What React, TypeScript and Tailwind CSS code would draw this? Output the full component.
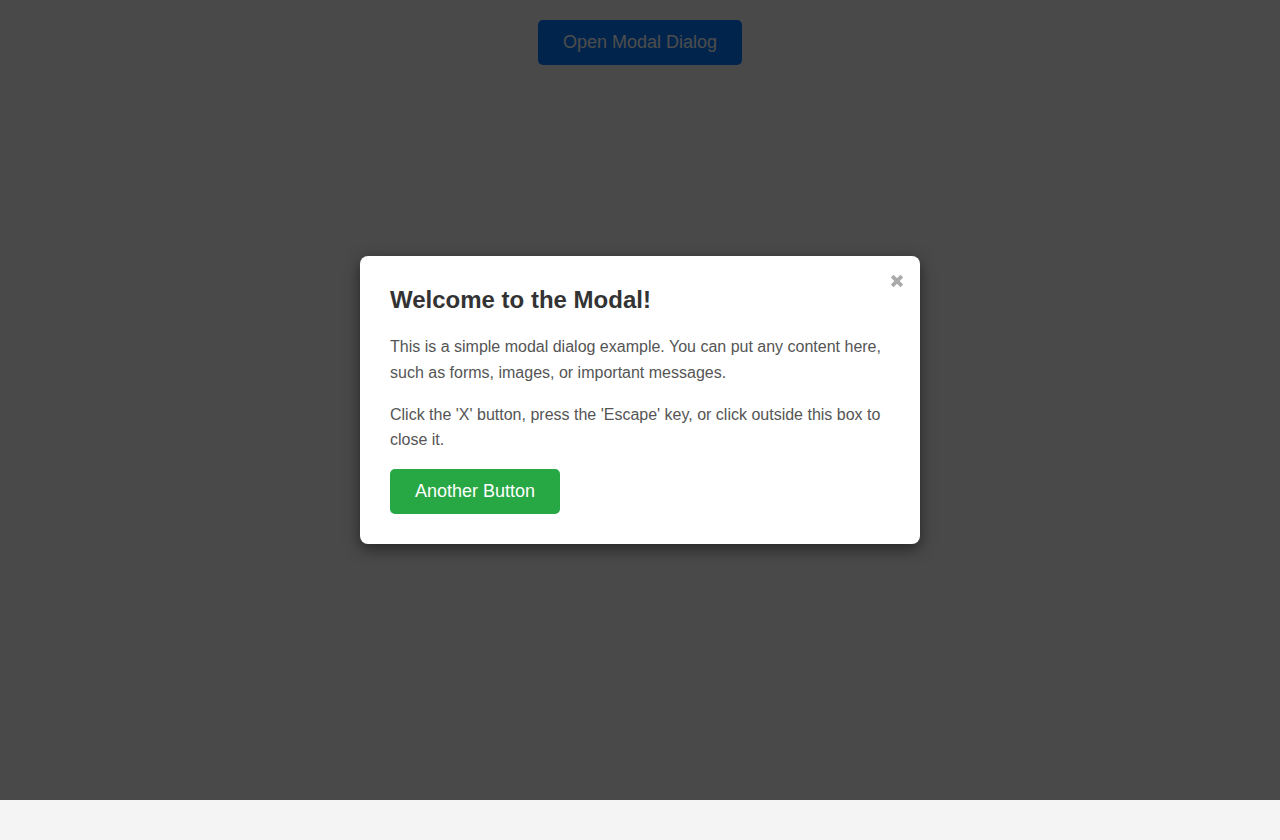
import { useState } from "react";

export default function App() {
  const [open, setOpen] = useState(true);

  return (
    <div
      className="relative min-h-[840px] w-full bg-[#f4f4f4]"
      style={{ fontFamily: '"Liberation Sans", Arial, sans-serif' }}
    >
      <div className="flex justify-center pt-5">
        <button
          onClick={() => setOpen(true)}
          className="rounded-[5px] bg-[#007bff] px-[25px] py-3 text-[18px] leading-[21px] text-white"
        >
          Open Modal Dialog
        </button>
      </div>

      {open && (
        <div
          className="absolute left-0 top-0 flex h-[800px] w-full items-center justify-center bg-black/70"
          onClick={() => setOpen(false)}
        >
          <div
            className="relative w-[560px] rounded-lg bg-white p-[30px] shadow-[0_5px_15px_rgba(0,0,0,0.5)]"
            onClick={(e) => e.stopPropagation()}
          >
            <button
              onClick={() => setOpen(false)}
              className="absolute right-[16px] top-[18px] text-[#aaa]"
              aria-label="Close"
            >
              <svg width="14" height="14" viewBox="0 0 14 14" className="block">
                <path
                  d="M2.2 2.2 L11.8 11.8 M11.8 2.2 L2.2 11.8"
                  stroke="currentColor"
                  strokeWidth="3.8"
                  strokeLinecap="butt"
                />
              </svg>
            </button>
            <h2 className="mb-5 text-[24px] font-bold leading-[28px] text-[#333]">
              Welcome to the Modal!
            </h2>
            <p className="mb-4 text-[16px] leading-[1.6] text-[#555]">
              This is a simple modal dialog example. You can put any content here,
              such as forms, images, or important messages.
            </p>
            <p className="mb-4 text-[16px] leading-[1.6] text-[#555]">
              Click the 'X' button, press the 'Escape' key, or click outside this box to
              close it.
            </p>
            <button className="block rounded-[5px] bg-[#28a745] px-[25px] py-3 text-[18px] leading-[21px] text-white">
              Another Button
            </button>
          </div>
        </div>
      )}
    </div>
  );
}
